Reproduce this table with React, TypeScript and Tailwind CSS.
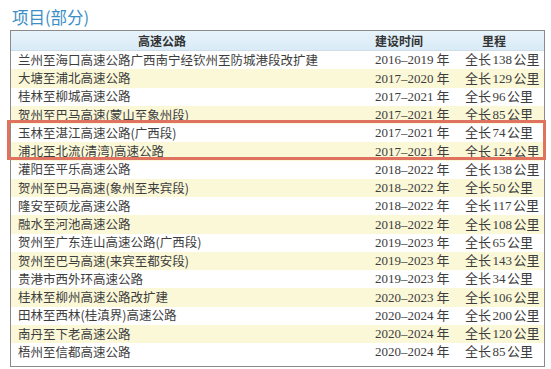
import React from 'react';

type Row = { name: string; years: string; km: string };

const rows: Row[] = [
  { name: '兰州至海口高速公路广西南宁经钦州至防城港段改扩建', years: '2016–2019', km: '138' },
  { name: '大塘至浦北高速公路', years: '2017–2020', km: '129' },
  { name: '桂林至柳城高速公路', years: '2017–2021', km: '96' },
  { name: '贺州至巴马高速(蒙山至象州段)', years: '2017–2021', km: '85' },
  { name: '玉林至湛江高速公路(广西段)', years: '2017–2021', km: '74' },
  { name: '浦北至北流(清湾)高速公路', years: '2017–2021', km: '124' },
  { name: '灌阳至平乐高速公路', years: '2018–2022', km: '138' },
  { name: '贺州至巴马高速(象州至来宾段)', years: '2018–2022', km: '50' },
  { name: '隆安至硕龙高速公路', years: '2018–2022', km: '117' },
  { name: '融水至河池高速公路', years: '2018–2022', km: '108' },
  { name: '贺州至广东连山高速公路(广西段)', years: '2019–2023', km: '65' },
  { name: '贺州至巴马高速(来宾至都安段)', years: '2019–2023', km: '143' },
  { name: '贵港市西外环高速公路', years: '2019–2023', km: '34' },
  { name: '桂林至柳州高速公路改扩建', years: '2020–2023', km: '106' },
  { name: '田林至西林(桂滇界)高速公路', years: '2020–2024', km: '200' },
  { name: '南丹至下老高速公路', years: '2020–2024', km: '120' },
  { name: '梧州至信都高速公路', years: '2020–2024', km: '85' },
];

export default function App() {
  return (
    <div className="w-[551px] h-[369px] bg-white overflow-hidden font-['Noto_Sans_CJK_SC',sans-serif]">
      <div className="pt-[6px] pl-[12px] h-[30px] text-[16.5px] leading-[22px] text-[#3b8ec6]">项目(部分)</div>

      <div className="relative ml-[10px] w-[535px] border border-[#8a8a8a] pb-[5px]">
        {/* header */}
        <div className="flex h-[20px] items-center bg-gradient-to-b from-[#e8f3fb] to-[#d9ebf7] border-b border-[#cfdde8] text-[12px] font-semibold text-[#333]">
          <div className="w-[364px]">
            <div className="w-[302px] text-center">高速公路</div>
          </div>
          <div className="w-[90px] whitespace-nowrap">建设时间</div>
          <div className="pl-[17px] whitespace-nowrap">里程</div>
        </div>

        {rows.map((r, i) => (
          <div
            key={r.name}
            className={`flex h-[18.25px] items-center text-[12.5px] text-[#3d3d3d] ${i % 2 === 1 ? 'bg-[#fbf8d8]' : 'bg-white'}`}
          >
            <div className="w-[364px] pl-[7px] whitespace-nowrap">{r.name}</div>
            <div className="w-[90px] whitespace-nowrap text-[13px] font-['Liberation_Serif','Noto_Sans_CJK_SC',serif]">
              {r.years}<span className="ml-[3px]">年</span>
            </div>
            <div className="whitespace-nowrap text-[13px] font-['Liberation_Serif','Noto_Sans_CJK_SC',serif]">
              全长<span className="mx-[1.5px]">{r.km}</span>公里
            </div>
          </div>
        ))}

        {/* highlight box over rows 5-6 */}
        <div className="absolute left-[-4px] right-[-2px] top-[89px] h-[40px] border-[3px] border-[#e0735f] pointer-events-none" />
      </div>
    </div>
  );
}
